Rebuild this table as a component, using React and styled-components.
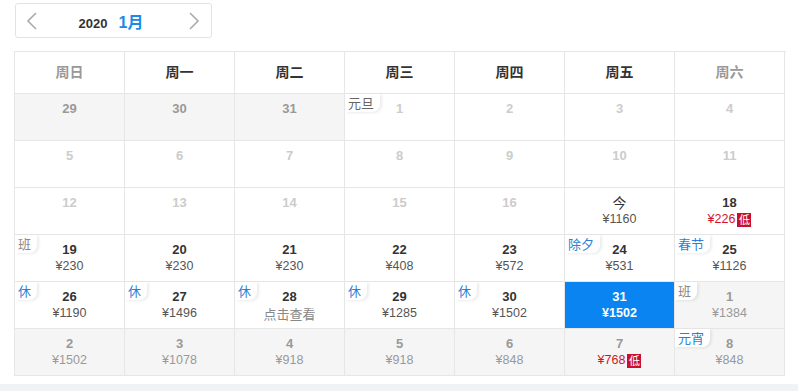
import React from "react";
import styled, { createGlobalStyle } from "styled-components";

const Global = createGlobalStyle`
  html, body { margin: 0; padding: 0; background: #fff; }
  body { font-family: "Liberation Sans", Arial, "Noto Sans CJK SC", sans-serif; color: #333; }
`;

const Page = styled.div`
  width: 798px;
  height: 391px;
  position: relative;
  overflow: hidden;
  padding: 3px 0 0 14px;
  box-sizing: border-box;
`;

const MonthBar = styled.div`
  margin-left: 1px;
  width: 197px;
  height: 35px;
  box-sizing: border-box;
  border: 1px solid #e3e3e3;
  border-radius: 3px;
  display: flex;
  align-items: center;
  justify-content: space-between;
  padding: 0 11px 0 10px;
`;

const Arrow = styled.span`
  display: flex;
  align-items: center;
  color: #aaa;
`;

const MonthLabel = styled.div`
  display: flex;
  align-items: baseline;
  gap: 11px;
  margin-right: 4px;
`;

const Year = styled.span`
  font-size: 13px;
  font-weight: bold;
  color: #333;
`;

const Month = styled.span`
  font-size: 16px;
  font-weight: bold;
  color: #1a8ae6;
  font-family: "Liberation Sans", "Noto Sans CJK SC", sans-serif;
`;

const Grid = styled.div`
  margin-top: 13px;
  width: 771px;
  display: grid;
  grid-template-columns: repeat(7, 110px);
  border-top: 1px solid #e6e6e6;
  border-left: 1px solid #e6e6e6;
`;

const Head = styled.div`
  height: 42px;
  padding-bottom: 3px;
  box-sizing: border-box;
  display: flex;
  align-items: center;
  justify-content: center;
  font-size: 14px;
  font-weight: bold;
  font-family: "Noto Sans CJK SC", sans-serif;
  color: ${(p) => (p.$weekend ? "#999" : "#333")};
  border-right: 1px solid #e6e6e6;
  border-bottom: 1px solid #e6e6e6;
`;

const Cell = styled.div`
  position: relative;
  height: 47px;
  box-sizing: border-box;
  padding-top: 6px;
  display: flex;
  flex-direction: column;
  align-items: center;
  justify-content: flex-start;
  border-right: 1px solid #e6e6e6;
  border-bottom: 1px solid #e6e6e6;
  background: ${(p) => (p.$sel ? "#0a84f0" : p.$gray ? "#f5f5f5" : "#fff")};
`;

const DayNum = styled.div`
  line-height: 17px;
  color: ${(p) =>
    p.$sel ? "#fff" : p.$tone === "dim" ? "#ccc" : p.$tone === "mid" ? "#999" : "#333"};
  font-family: ${(p) => (p.$cjk ? '"Noto Sans CJK SC", sans-serif' : '"Liberation Sans", Arial, sans-serif')};
  font-weight: ${(p) => (p.$cjk ? "normal" : "bold")};
  font-size: ${(p) => (p.$cjk ? "14px" : "13px")};
`;

const Price = styled.div`
  display: flex;
  align-items: center;
  gap: 2px;
  font-size: ${(p) => (p.$cjk ? "13px" : "12.5px")};
  line-height: 17px;
  font-weight: ${(p) => (p.$sel ? "bold" : "normal")};
  color: ${(p) =>
    p.$sel ? "#fff" : p.$low ? "#d4122a" : p.$gray ? "#999" : p.$cjk ? "#888" : "#555"};
  font-family: ${(p) => (p.$cjk ? '"Noto Sans CJK SC", sans-serif' : '"Liberation Sans", Arial, sans-serif')};
`;

const Low = styled.span`
  display: inline-flex;
  align-items: center;
  justify-content: center;
  width: 14px;
  height: 14px;
  background: #c8102e;
  color: #fff;
  font-size: 11px;
  font-family: "Noto Sans CJK SC", sans-serif;
  line-height: 1;
`;

const Tag = styled.span`
  position: absolute;
  left: 0;
  top: 0;
  padding: 0 6px 1px 3px;
  background: #fff;
  font-size: 13px;
  line-height: 17px;
  font-family: "Noto Sans CJK SC", sans-serif;
  border-bottom-right-radius: 8px;
  box-shadow: 2px 1px 3px rgba(0, 0, 0, 0.08);
  color: ${(p) => (p.$tone === "blue" ? "#2c7fd6" : p.$tone === "gray" ? "#888" : "#666")};
`;

const BottomBand = styled.div`
  position: absolute;
  left: 0;
  right: 0;
  bottom: 0;
  height: 7px;
  background: #f1f2f5;
`;

const Chevron = ({ dir }) => (
  <svg width="12" height="20" viewBox="0 0 12 20">
    <path
      d={dir === "left" ? "M10 2 L2 10 L10 18" : "M2 2 L10 10 L2 18"}
      fill="none"
      stroke="#aaa"
      strokeWidth="1.6"
    />
  </svg>
);

const heads = ["周日", "周一", "周二", "周三", "周四", "周五", "周六"];

const cells = [
  { d: "29", tone: "mid", gray: true },
  { d: "30", tone: "mid", gray: true },
  { d: "31", tone: "mid", gray: true },
  { d: "1", tone: "dim", tag: "元旦", tagTone: "dark" },
  { d: "2", tone: "dim" },
  { d: "3", tone: "dim" },
  { d: "4", tone: "dim" },
  { d: "5", tone: "dim" },
  { d: "6", tone: "dim" },
  { d: "7", tone: "dim" },
  { d: "8", tone: "dim" },
  { d: "9", tone: "dim" },
  { d: "10", tone: "dim" },
  { d: "11", tone: "dim" },
  { d: "12", tone: "dim" },
  { d: "13", tone: "dim" },
  { d: "14", tone: "dim" },
  { d: "15", tone: "dim" },
  { d: "16", tone: "dim" },
  { d: "今", cjk: true, p: "¥1160" },
  { d: "18", p: "¥226", low: true },
  { d: "19", p: "¥230", tag: "班", tagTone: "gray" },
  { d: "20", p: "¥230" },
  { d: "21", p: "¥230" },
  { d: "22", p: "¥408" },
  { d: "23", p: "¥572" },
  { d: "24", p: "¥531", tag: "除夕", tagTone: "blue" },
  { d: "25", p: "¥1126", tag: "春节", tagTone: "blue" },
  { d: "26", p: "¥1190", tag: "休", tagTone: "blue" },
  { d: "27", p: "¥1496", tag: "休", tagTone: "blue" },
  { d: "28", p: "点击查看", pcjk: true, tag: "休", tagTone: "blue" },
  { d: "29", p: "¥1285", tag: "休", tagTone: "blue" },
  { d: "30", p: "¥1502", tag: "休", tagTone: "blue" },
  { d: "31", p: "¥1502", sel: true },
  { d: "1", p: "¥1384", gray: true, tone: "mid", tag: "班", tagTone: "gray" },
  { d: "2", p: "¥1502", gray: true, tone: "mid" },
  { d: "3", p: "¥1078", gray: true, tone: "mid" },
  { d: "4", p: "¥918", gray: true, tone: "mid" },
  { d: "5", p: "¥918", gray: true, tone: "mid" },
  { d: "6", p: "¥848", gray: true, tone: "mid" },
  { d: "7", p: "¥768", gray: true, tone: "mid", low: true },
  { d: "8", p: "¥848", gray: true, tone: "mid", tag: "元宵", tagTone: "blue" },
];

export default function App() {
  return (
    <Page>
      <Global />
      <MonthBar>
        <Arrow>
          <Chevron dir="left" />
        </Arrow>
        <MonthLabel>
          <Year>2020</Year>
          <Month>1月</Month>
        </MonthLabel>
        <Arrow>
          <Chevron dir="right" />
        </Arrow>
      </MonthBar>
      <Grid>
        {heads.map((h, i) => (
          <Head key={h} $weekend={i === 0 || i === 6}>
            {h}
          </Head>
        ))}
        {cells.map((c, i) => (
          <Cell key={i} $gray={c.gray} $sel={c.sel}>
            {c.tag && <Tag $tone={c.tagTone}>{c.tag}</Tag>}
            <DayNum $tone={c.tone} $sel={c.sel} $cjk={c.cjk}>
              {c.d}
            </DayNum>
            {c.p && (
              <Price $sel={c.sel} $low={c.low} $gray={c.gray} $cjk={c.pcjk}>
                {c.p}
                {c.low && <Low>低</Low>}
              </Price>
            )}
          </Cell>
        ))}
      </Grid>
      <BottomBand />
    </Page>
  );
}
